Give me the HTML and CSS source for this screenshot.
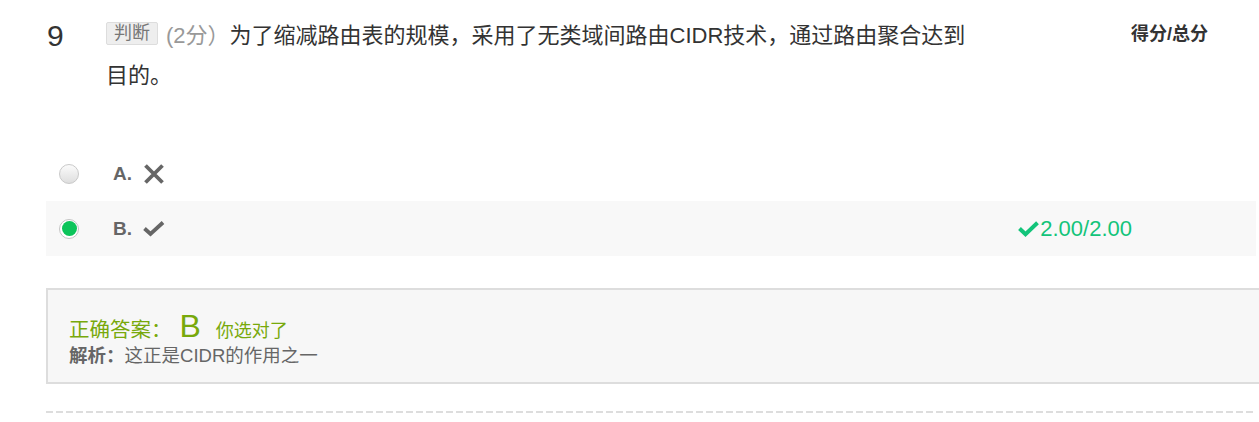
FILE: index.html
```html
<!DOCTYPE html>
<html lang="zh-CN">
<head>
<meta charset="utf-8">
<title>题目 9</title>
<link rel="stylesheet" href="styles.css">
</head>
<body>
<div class="question">
  <div class="q-head">
    <div class="q-num">9</div>
    <div class="q-title"><span class="tag">判断</span><span class="q-points">(2分）</span>为了缩减路由表的规模，采用了无类域间路由CIDR技术，通过路由聚合达到目的。</div>
    <div class="q-score-label">得分/总分</div>
  </div>
  <ul class="options">
    <li class="opt">
      <span class="radio"></span>
      <span class="opt-label">A.</span>
      <svg class="opt-icon" width="22" height="22" viewBox="0 0 22 22"><path d="M2.5 2.5 L19.5 19.5 M19.5 2.5 L2.5 19.5" stroke="#666" stroke-width="3.8" fill="none"/></svg>
    </li>
    <li class="opt opt-selected">
      <span class="radio radio-on"><span class="radio-dot"></span></span>
      <span class="opt-label">B.</span>
      <svg class="opt-icon" width="22" height="16" viewBox="0 0 22 16"><path d="M1.5 7.5 L7.5 13 L20 1.5" stroke="#666" stroke-width="3.8" fill="none"/></svg>
      <span class="got"><svg class="got-icon" width="21" height="16" viewBox="0 0 21 16"><path d="M1.5 7.5 L7.5 13.2 L19.5 1.8" stroke="#13c47a" stroke-width="4" fill="none"/></svg>2.00/2.00</span>
    </li>
  </ul>
  <div class="answer">
    <div class="answer-line"><span class="answer-key">正确答案：</span><span class="answer-letter">B</span><span class="answer-note">你选对了</span></div>
    <div class="analysis"><span class="analysis-label">解析：</span>这正是CIDR的作用之一</div>
  </div>
  <div class="sep"></div>
</div>
</body>
</html>
```
FILE: styles.css
```css
html, body {
  margin: 0;
  padding: 0;
  background: #fff;
  overflow: hidden;
}
body {
  font-family: "Liberation Sans", "Noto Sans CJK SC", sans-serif;
  color: #333;
}
.question {
  width: 1210px;
  margin-left: 46px;
  padding-top: 16px;
}
.q-head {
  display: flex;
  align-items: flex-start;
}
.q-num {
  width: 60px;
  flex: none;
  font-size: 30px;
  line-height: 40px;
  color: #333;
  padding-left: 1px;
  box-sizing: border-box;
}
.q-title {
  width: 866px;
  flex: none;
  font-size: 22px;
  line-height: 40px;
  color: #333;
}
.tag {
  display: inline-block;
  vertical-align: top;
  margin-top: 6px;
  margin-right: 8px;
  padding: 0 7px;
  height: 21px;
  line-height: 21px;
  font-size: 18px;
  color: #777;
  background: #eee;
  border: 1px solid #ddd;
  border-radius: 2px;
}
.q-points {
  color: #999;
}
.q-score-label {
  margin-left: 159px;
  font-size: 18px;
  line-height: 40px;
  font-weight: bold;
  color: #333;
  margin-top: -2px;
  white-space: nowrap;
}
.options {
  list-style: none;
  margin: 50px 0 0;
  padding: 0;
}
.opt {
  display: flex;
  align-items: center;
  height: 55px;
  padding-left: 13px;
}
.opt-selected {
  background: #f8f8f8;
}
.radio {
  width: 20px;
  height: 20px;
  box-sizing: border-box;
  border-radius: 50%;
  border: 1px solid #c9c9c9;
  background: linear-gradient(#fbfbfb, #dedede);
  display: flex;
  align-items: center;
  justify-content: center;
}
.radio-on {
  background: #fff;
  border-color: #c4c4c4;
}
.radio-dot {
  width: 15px;
  height: 15px;
  border-radius: 50%;
  background: #0cc45a;
}
.opt-label {
  margin-left: 34px;
  font-size: 19px;
  font-weight: bold;
  color: #666;
}
.opt-icon {
  margin-left: 11px;
  display: block;
}
.got {
  margin-left: auto;
  margin-right: 124px;
  display: flex;
  align-items: center;
  font-size: 22px;
  color: #13c47a;
}
.got-icon {
  display: block;
  margin-right: 1px;
}
.answer {
  margin-top: 32px;
  width: calc(100% + 40px);
  box-sizing: border-box;
  border: 2px solid #ddd;
  background: #f7f7f7;
  padding: 21px 21px 12px;
}
.answer-line {
  display: flex;
  align-items: baseline;
  height: 31px;
  line-height: 30px;
  color: #78a90b;
}
.answer-key {
  font-size: 20.5px;
}
.answer-letter {
  font-size: 32px;
  margin-left: 8px;
}
.answer-note {
  font-size: 18px;
  margin-left: 15px;
}
.analysis {
  font-size: 18.5px;
  line-height: 28px;
  color: #666;
}
.analysis-label {
  font-weight: bold;
}
.sep {
  margin-top: 27px;
  height: 2px;
  background: repeating-linear-gradient(to right, #ddd 0 7px, transparent 7px 10px);
}
```
